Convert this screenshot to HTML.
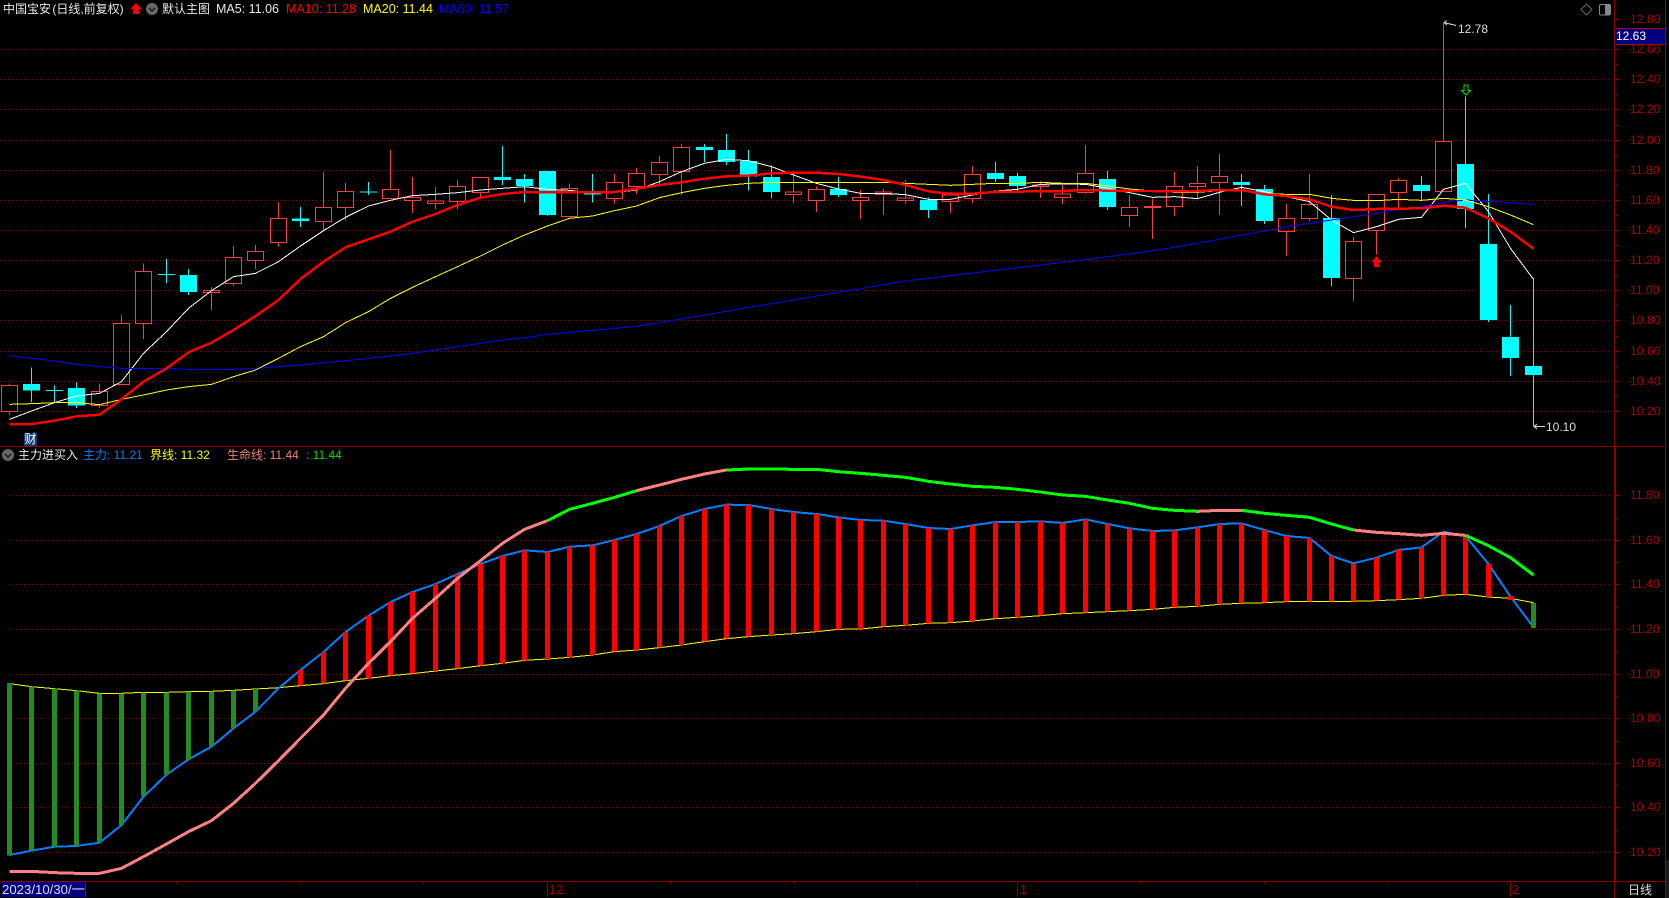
<!DOCTYPE html>
<html><head><meta charset="utf-8"><title>中国宝安</title>
<style>
html,body{margin:0;padding:0;background:#000}
#r{position:relative;width:1669px;height:898px;overflow:hidden;background:#000;font-family:"Liberation Sans","Noto Sans CJK SC",sans-serif}
svg{position:absolute;left:0;top:0;display:block}
#m *{vector-effect:non-scaling-stroke}
#r span{position:absolute;white-space:nowrap;line-height:16px;font-size:12.5px;height:16px}
.c{font-size:12px!important}
.a{color:#b00000;left:1630px;font-size:12.2px!important}
</style></head><body><div id="r">
<svg width="1669" height="898" viewBox="0 0 1669 898" shape-rendering="crispEdges" fill="none">
<path stroke="#800000" stroke-width="1" stroke-dasharray="1 3" d="M0 49.5H1611M0 79.5H1611M0 109.5H1611M0 140.5H1611M0 170.5H1611M0 200.5H1611M0 230.5H1611M0 260.5H1611M0 290.5H1611M0 320.5H1611M0 351.5H1611M0 381.5H1611M0 411.5H1611M8 495.5H1611M8 540.5H1611M8 584.5H1611M8 629.5H1611M8 674.5H1611M8 718.5H1611M8 763.5H1611M8 807.5H1611M8 852.5H1611"/>
</svg>
<svg id="m" width="1669" height="898" viewBox="0 0 1669 2694" preserveAspectRatio="none" fill="none" shape-rendering="crispEdges">
<!-- red candles -->
<path stroke="#ff3c3c" stroke-width="1" d="M9.5 1150V1156M9.5 1235V1245M1.5 1156H17.5V1235H1.5ZM99.5 1150V1175M99.5 1216V1224M91.5 1175H107.5V1216H91.5ZM121.5 945V970M113.5 970H129.5V1153H113.5ZM143.5 790V814M143.5 970V1017M135.5 814H151.5V970H135.5ZM211.5 861V871M211.5 878V930M203.5 871H219.5V878H203.5ZM233.5 738V772M233.5 851V858M225.5 772H241.5V851H225.5ZM255.5 735V754M255.5 781V807M247.5 754H263.5V781H247.5ZM278.5 606V655M278.5 728V741M270.5 655H286.5V728H270.5ZM323.5 516V622M323.5 665V690M315.5 622H331.5V665H315.5ZM345.5 549V574M345.5 623V662M337.5 574H353.5V623H337.5ZM390.5 450V568M382.5 568H398.5V596H382.5ZM412.5 531V592M412.5 602V639M404.5 592H420.5V602H404.5ZM435.5 561V603M435.5 611V627M427.5 603H443.5V611H427.5ZM457.5 540V559M457.5 605V629M449.5 559H465.5V605H449.5ZM480.5 578V595M472.5 532H488.5V578H472.5ZM569.5 550V565M561.5 565H577.5V650H561.5ZM614.5 522V547M614.5 596V611M606.5 547H622.5V596H606.5ZM636.5 504V520M636.5 560V582M628.5 520H644.5V560H628.5ZM659.5 468V487M659.5 524V555M651.5 487H667.5V524H651.5ZM681.5 432V442M681.5 515V585M673.5 442H689.5V515H673.5ZM793.5 513V576M793.5 584V609M785.5 576H801.5V584H785.5ZM816.5 560V568M816.5 602V636M808.5 568H824.5V602H808.5ZM860.5 570V592M860.5 602V657M852.5 592H868.5V602H852.5ZM883.5 567V576M883.5 584V645M875.5 576H891.5V584H875.5ZM905.5 540V594M905.5 602V612M897.5 594H913.5V602H897.5ZM950.5 576V585M950.5 605V639M942.5 585H958.5V605H942.5ZM972.5 498V523M972.5 596V609M964.5 523H980.5V596H964.5ZM1040.5 543V555M1040.5 560V594M1032.5 555H1048.5V560H1032.5ZM1062.5 555V582M1062.5 593V612M1054.5 582H1070.5V593H1054.5ZM1085.5 435V520M1085.5 578V582M1077.5 520H1093.5V578H1077.5ZM1129.5 585V622M1129.5 647V681M1121.5 622H1137.5V647H1121.5ZM1152.5 597V619M1152.5 623V717M1144.5 619H1160.5V623H1144.5ZM1174.5 516V559M1174.5 620V648M1166.5 559H1182.5V620H1166.5ZM1197.5 498V550M1197.5 560V594M1189.5 550H1205.5V560H1189.5ZM1219.5 462V529M1219.5 548V645M1211.5 529H1227.5V548H1211.5ZM1286.5 612V655M1286.5 695V768M1278.5 655H1294.5V695H1278.5ZM1309.5 522V613M1309.5 656V663M1301.5 613H1317.5V656H1301.5ZM1353.5 711V724M1353.5 836V903M1345.5 724H1361.5V836H1345.5ZM1376.5 692V763M1368.5 583H1384.5V692H1368.5ZM1398.5 534V541M1398.5 578V630M1390.5 541H1406.5V578H1390.5ZM1443.5 68V424M1435.5 424H1451.5V575H1435.5Z"/>
<!-- cyan wicks -->
<path stroke="#00ffff" stroke-width="1" d="M31.5 1102V1206M54.5 1156V1206M76.5 1147V1224M166.5 777V849M188.5 807V885M300.5 621V681M368.5 546V585M502.5 438V555M524.5 522V608M547.5 513V648M592.5 522V608M704.5 432V486M726.5 402V495M748.5 450V572M771.5 496V594M838.5 531V591M928.5 592V654M995.5 486V546M1017.5 519V573M1107.5 513V630M1241.5 522V618M1264.5 555V672M1331.5 585V858M1421.5 528V600M1465.5 290V684M1488.5 582V966M1510.5 915V1128M1533.5 834V1280"/>
<!-- cyan bodies -->
<path fill="#00ffff" d="M23 1152H40V1172H23ZM46 1170H63V1173H46ZM68 1164H85V1217H68ZM158 822H175V825H158ZM180 825H197V876H180ZM292 655H309V663H292ZM360 574H377V577H360ZM494 531H511V540H494ZM516 537H533V558H516ZM539 513H556V645H539ZM584 580H601V584H584ZM696 441H713V450H696ZM718 450H735V486H718ZM740 483H757V530H740ZM763 531H780V576H763ZM830 567H847V585H830ZM920 600H937V630H920ZM987 519H1004V537H987ZM1009 528H1026V558H1009ZM1099 537H1116V621H1099ZM1233 546H1250V555H1233ZM1256 567H1273V663H1256ZM1323 654H1340V834H1323ZM1413 555H1430V573H1413ZM1457 492H1474V627H1457ZM1480 732H1497V960H1480ZM1502 1011H1519V1074H1502ZM1525 1098H1542V1125H1525Z"/>
<!-- MA5 -->
<polyline stroke="#fff" stroke-width="1" points="9.5,1258 31.5,1233 54.5,1208 76.5,1188 99.5,1180 121.5,1145 143.5,1060 166.5,995 188.5,925 211.5,872 233.5,830 255.5,820 278.5,785 300.5,738 323.5,692 345.5,652 368.5,618 390.5,601 412.5,587 435.5,583 457.5,578 480.5,570 502.5,565 524.5,560 547.5,568 569.5,571 592.5,580 614.5,578 636.5,570 659.5,545 681.5,515 704.5,490 726.5,478 748.5,482 771.5,500 793.5,525 816.5,550 838.5,567 860.5,580 883.5,580 905.5,584 928.5,598 950.5,598 972.5,585 995.5,573 1017.5,568 1040.5,553 1062.5,552 1085.5,553 1107.5,565 1129.5,578 1152.5,592 1174.5,590 1197.5,596 1219.5,577 1241.5,562 1264.5,575 1286.5,590 1309.5,605 1331.5,660 1353.5,698 1376.5,680 1398.5,658 1421.5,652 1443.5,568 1465.5,550 1488.5,635 1510.5,745 1533.5,838"/>
<!-- MA60 -->
<polyline stroke="#0000ff" stroke-width="1" points="9.5,1067 31.5,1075 54.5,1083 76.5,1093 99.5,1100 121.5,1105 143.5,1105 166.5,1105 188.5,1108 211.5,1108 233.5,1108 255.5,1105 278.5,1100 300.5,1095 323.5,1088 345.5,1082 368.5,1075 390.5,1068 412.5,1060 435.5,1050 457.5,1040 480.5,1030 502.5,1020 524.5,1013 547.5,1003 569.5,997 592.5,991 614.5,985 636.5,979 659.5,968 681.5,957 704.5,945 726.5,934 748.5,922 771.5,911 793.5,900 816.5,888 838.5,877 860.5,866 883.5,854 905.5,843 928.5,835 950.5,827 972.5,819 995.5,811 1017.5,803 1040.5,795 1062.5,787 1085.5,779 1107.5,770 1129.5,762 1152.5,752 1174.5,742 1197.5,730 1219.5,718 1241.5,705 1264.5,693 1286.5,680 1309.5,670 1331.5,660 1353.5,650 1376.5,640 1398.5,628 1421.5,620 1443.5,607 1465.5,600 1488.5,604 1510.5,608 1533.5,613"/>
<!-- MA20 -->
<polyline stroke="#ffff00" stroke-width="1" points="9.5,1213 31.5,1211 54.5,1208 76.5,1208 99.5,1214 121.5,1198 143.5,1185 166.5,1170 188.5,1160 211.5,1153 233.5,1130 255.5,1110 278.5,1075 300.5,1040 323.5,1010 345.5,968 368.5,935 390.5,895 412.5,862 435.5,830 457.5,800 480.5,768 502.5,735 524.5,705 547.5,678 569.5,655 592.5,648 614.5,632 636.5,618 659.5,593 681.5,578 704.5,565 726.5,556 748.5,550 771.5,547 793.5,547 816.5,547 838.5,547 860.5,547 883.5,547 905.5,550 928.5,553 950.5,556 972.5,553 995.5,550 1017.5,550 1040.5,547 1062.5,550 1085.5,550 1107.5,558 1129.5,567 1152.5,573 1174.5,577 1197.5,577 1219.5,572 1241.5,572 1264.5,581 1286.5,583 1309.5,583 1331.5,595 1353.5,601 1376.5,602 1398.5,598 1421.5,601 1443.5,595 1465.5,600 1488.5,620 1510.5,645 1533.5,674"/>
<!-- MA10 -->
<polyline stroke="#ff0000" stroke-width="2.5" points="9.5,1272 31.5,1272 54.5,1262 76.5,1249 99.5,1244 121.5,1198 143.5,1145 166.5,1105 188.5,1057 211.5,1028 233.5,990 255.5,948 278.5,900 300.5,837 323.5,785 345.5,742 368.5,718 390.5,695 412.5,665 435.5,642 457.5,615 480.5,593 502.5,582 524.5,576 547.5,576 569.5,576 592.5,577 614.5,576 636.5,566 659.5,555 681.5,547 704.5,536 726.5,529 748.5,527 771.5,520 793.5,518 816.5,518 838.5,522 860.5,530 883.5,540 905.5,555 928.5,574 950.5,582 972.5,581 995.5,576 1017.5,575 1040.5,573 1062.5,573 1085.5,570 1107.5,572 1129.5,573 1152.5,573 1174.5,573 1197.5,573 1219.5,570 1241.5,570 1264.5,583 1286.5,588 1309.5,598 1331.5,620 1353.5,630 1376.5,627 1398.5,626 1421.5,625 1443.5,617 1465.5,623 1488.5,655 1510.5,695 1533.5,746"/>
<g transform="translate(0,1350)">
<polyline stroke="#ffff00" stroke-width="1" points="9.5,701 31.5,710 54.5,716 76.5,722 99.5,730 121.5,730 143.5,727 166.5,727 188.5,725 211.5,724 233.5,721 255.5,717 278.5,713 300.5,707 323.5,701 345.5,692 368.5,685 390.5,677 412.5,671 435.5,663 457.5,656 480.5,647 502.5,640 524.5,631 547.5,627 569.5,622 592.5,615 614.5,605 636.5,600 659.5,593 681.5,585 704.5,575 726.5,566 748.5,560 771.5,555 793.5,551 816.5,545 838.5,538 860.5,537 883.5,530 905.5,526 928.5,520 950.5,518 972.5,513 995.5,506 1017.5,502 1040.5,497 1062.5,491 1085.5,488 1107.5,485 1129.5,482 1152.5,478 1174.5,472 1197.5,469 1219.5,463 1241.5,460 1264.5,458 1286.5,455 1309.5,454 1331.5,454 1353.5,454 1376.5,452 1398.5,449 1421.5,445 1443.5,436 1465.5,433 1488.5,441 1510.5,445 1533.5,458"/>
<polyline stroke="#0080ff" stroke-width="2" points="9.5,1215 31.5,1202 54.5,1190 76.5,1188 99.5,1178 121.5,1125 143.5,1040 166.5,974 188.5,928 211.5,890 233.5,835 255.5,785 278.5,715 300.5,660 323.5,606 345.5,546 368.5,497 390.5,456 412.5,426 435.5,402 457.5,372 480.5,342 502.5,318 524.5,301 547.5,306 569.5,290 592.5,286 614.5,270 636.5,252 659.5,228 681.5,198 704.5,177 726.5,164 748.5,165 771.5,177 793.5,186 816.5,192 838.5,202 860.5,210 883.5,212 905.5,222 928.5,234 950.5,237 972.5,226 995.5,216 1017.5,216 1040.5,214 1062.5,219 1085.5,208 1107.5,222 1129.5,235 1152.5,243 1174.5,241 1197.5,232 1219.5,222 1241.5,220 1264.5,240 1286.5,258 1309.5,264 1331.5,318 1353.5,340 1376.5,323 1398.5,300 1421.5,292 1443.5,245 1465.5,258 1488.5,342 1510.5,440 1533.5,532"/>
<path fill="#228b22" d="M7 699H12V1217H7ZM29 710H34V1202H29ZM52 716H57V1190H52ZM74 722H79V1188H74ZM97 730H102V1178H97ZM119 730H124V1125H119ZM141 727H146V1040H141ZM164 727H169V974H164ZM186 725H191V928H186ZM209 724H214V890H209ZM231 721H236V835H231ZM253 717H258V785H253ZM1531 459H1536V534H1531Z"/>
<path fill="#ff0000" d="M298 660H303V707H298ZM321 606H326V701H321ZM343 546H348V692H343ZM366 497H371V685H366ZM388 456H393V677H388ZM410 426H415V671H410ZM433 402H438V663H433ZM455 372H460V656H455ZM478 342H483V647H478ZM500 318H505V640H500ZM522 301H527V631H522ZM545 306H550V627H545ZM567 290H572V622H567ZM590 286H595V615H590ZM612 270H617V605H612ZM634 252H639V600H634ZM657 228H662V593H657ZM679 198H684V585H679ZM702 177H707V575H702ZM724 164H729V566H724ZM746 165H751V560H746ZM769 177H774V555H769ZM791 186H796V551H791ZM814 192H819V545H814ZM836 202H841V538H836ZM858 210H863V537H858ZM881 212H886V530H881ZM903 222H908V526H903ZM926 234H931V520H926ZM948 237H953V518H948ZM970 226H975V513H970ZM993 216H998V506H993ZM1015 216H1020V502H1015ZM1038 214H1043V497H1038ZM1060 219H1065V491H1060ZM1083 208H1088V488H1083ZM1105 222H1110V485H1105ZM1127 235H1132V482H1127ZM1150 243H1155V478H1150ZM1172 241H1177V472H1172ZM1195 232H1200V469H1195ZM1217 222H1222V463H1217ZM1239 220H1244V460H1239ZM1262 240H1267V458H1262ZM1284 258H1289V455H1284ZM1307 264H1312V454H1307ZM1329 318H1334V454H1329ZM1351 340H1356V454H1351ZM1374 323H1379V452H1374ZM1396 300H1401V449H1396ZM1419 292H1424V445H1419ZM1441 250H1446V436H1441ZM1463 258H1468V433H1463ZM1486 342H1491V441H1486ZM1508 438H1513V450H1508Z"/>
<g stroke-width="3">
<polyline stroke="#ff8080" points="9.5,1264 31.5,1264 54.5,1268 76.5,1270 99.5,1270 121.5,1255 143.5,1220 166.5,1182 188.5,1145 211.5,1112 233.5,1060 255.5,1000 278.5,932 300.5,865 323.5,795 345.5,715 368.5,640 390.5,575 412.5,505 435.5,445 457.5,385 480.5,332 502.5,280 524.5,238 547.5,212"/>
<polyline stroke="#00ff00" points="547.5,212 569.5,178 592.5,160 614.5,142 636.5,122"/>
<polyline stroke="#ff8080" points="636.5,122 659.5,105 681.5,88 704.5,72 726.5,60"/>
<polyline stroke="#00ff00" points="726.5,60 748.5,57 771.5,57 793.5,58 816.5,58 838.5,65 860.5,70 883.5,76 905.5,82 928.5,94 950.5,102 972.5,109 995.5,112 1017.5,118 1040.5,126 1062.5,135 1085.5,139 1107.5,150 1129.5,160 1152.5,175 1174.5,181 1197.5,184"/>
<polyline stroke="#ff8080" points="1197.5,184 1219.5,181 1241.5,181"/>
<polyline stroke="#00ff00" points="1241.5,181 1264.5,190 1286.5,196 1309.5,202 1331.5,222 1353.5,240"/>
<polyline stroke="#ff8080" points="1353.5,240 1376.5,247 1398.5,251 1421.5,256 1443.5,250 1465.5,256"/>
<polyline stroke="#00ff00" points="1465.5,256 1488.5,287 1510.5,323 1533.5,375"/>
</g>
</g>
</svg>
<svg width="1669" height="898" viewBox="0 0 1669 898" fill="none">
<g shape-rendering="crispEdges">
<path stroke="#8b0000" d="M0 446.5H1665M0 881.5H1665M1614.5 0V898M547.5 882V897M1017.5 882V897M1510.5 882V897"/>
<path stroke="#8b0000" d="M1615.5 446V881"/>
<path stroke="#8b0000" d="M1615 19.5H1620M1615 49.5H1620M1615 79.5H1620M1615 109.5H1620M1615 140.5H1620M1615 170.5H1620M1615 200.5H1620M1615 230.5H1620M1615 260.5H1620M1615 290.5H1620M1615 320.5H1620M1615 351.5H1620M1615 381.5H1620M1615 411.5H1620M1615 495.5H1620M1615 540.5H1620M1615 584.5H1620M1615 629.5H1620M1615 674.5H1620M1615 718.5H1620M1615 763.5H1620M1615 807.5H1620M1615 852.5H1620"/>
<path stroke="#8b0000" d="M1615 64.5H1618M1615 94.5H1618M1615 125.5H1618M1615 155.5H1618M1615 185.5H1618M1615 215.5H1618M1615 245.5H1618M1615 275.5H1618M1615 305.5H1618M1615 336.5H1618M1615 366.5H1618M1615 396.5H1618M1615 518.5H1618M1615 562.5H1618M1615 607.5H1618M1615 652.5H1618M1615 696.5H1618M1615 741.5H1618M1615 785.5H1618M1615 830.5H1618"/>
<path stroke="#8b0000" d="M176.5 882V884M300.5 882V884M423.5 882V884M670.5 882V884M794.5 882V884M917.5 882V884M1140.5 882V884M1264.5 882V884M1387.5 882V884"/>
<rect x="1665" y="0" width="1" height="898" fill="#333"/>
<rect x="1666" y="860" width="3" height="38" fill="#1a1a1a"/>
<rect x="1615" y="28" width="50" height="16" fill="#000080"/>
<path stroke="#b00000" d="M1615 28.5H1665M1615 44.5H1665"/>
<rect x="2" y="882" width="84" height="15" fill="#000080"/>
<path stroke="#a00000" d="M85.5 882V897"/>
<rect x="24" y="433" width="13" height="13" fill="#123e78"/>
</g>
<!-- top-left up arrow -->
<path fill="#ff0000" d="M136 3L142 9H139V14H133V9H130Z"/>
<circle cx="152" cy="9" r="6" fill="#666"/>
<path d="M149 8L152 11L155 8" stroke="#1a1a1a" stroke-width="1.4"/>
<circle cx="8" cy="455" r="6" fill="#666"/>
<path d="M5 454L8 457L11 454" stroke="#1a1a1a" stroke-width="1.4"/>
<!-- top-right icons -->
<path d="M1586.5 4L1592 9.5L1586.5 15L1581 9.5Z" stroke="#666"/>
<rect x="1599.5" y="4.5" width="11" height="10.5" rx="1.5" stroke="#888"/>
<rect x="1605" y="5" width="5" height="9.5" fill="#888"/>
<!-- annotation arrows -->
<path stroke="#ddd" d="M1444 22.5L1456 25.5M1444 22.5L1447 20.5M1444 22.5L1447 25"/>
<path stroke="#ddd" d="M1534 426.5H1545M1534 426.5L1537 424M1534 426.5L1537 429"/>
<!-- signal arrows -->
<path fill="#ff0000" d="M1376.5 256L1381.5 262H1379V267H1374V262H1371.5Z"/>
<path stroke="#00e000" d="M1464 85H1468V90.5H1470.5L1466 95L1461.5 90.5H1464Z"/>
</svg>
<span class="c" style="left:3px;top:1px;color:#e8e8e8;word-spacing:-2px">中国宝安 (日线,前复权)</span>
<span class="c" style="left:162px;top:1px;color:#e8e8e8">默认主图</span>
<span style="left:216px;top:1px;color:#e8e8e8">MA5: 11.06</span>
<span style="left:286px;top:1px;color:#ff0000">MA10: 11.28</span>
<span style="left:363px;top:1px;color:#ffff00">MA20: 11.44</span>
<span style="left:439px;top:1px;color:#0000ff">MA60: 11.57</span>
<span class="c" style="left:18px;top:447px;color:#e8e8e8">主力进买入</span>
<span class="c" style="left:83px;top:447px;color:#0080ff">主力: 11.21</span>
<span class="c" style="left:150px;top:447px;color:#ffff00">界线: 11.32</span>
<span class="c" style="left:227px;top:447px;color:#f08070">生命线: 11.44</span>
<span class="c" style="left:306px;top:447px;color:#00e000">: 11.44</span>
<span class="c" style="left:24.5px;top:431px;color:#fff">财</span>
<span class="c" style="left:1458px;top:21px;color:#ddd">12.78</span>
<span class="c" style="left:1546px;top:419px;color:#ddd">10.10</span>
<span class="a" style="top:11px">12.80</span>
<span class="a" style="top:41px">12.60</span>
<span class="a" style="top:71px">12.40</span>
<span class="a" style="top:101px">12.20</span>
<span class="a" style="top:132px">12.00</span>
<span class="a" style="top:162px">11.80</span>
<span class="a" style="top:192px">11.60</span>
<span class="a" style="top:222px">11.40</span>
<span class="a" style="top:252px">11.20</span>
<span class="a" style="top:282px">11.00</span>
<span class="a" style="top:312px">10.80</span>
<span class="a" style="top:343px">10.60</span>
<span class="a" style="top:373px">10.40</span>
<span class="a" style="top:403px">10.20</span>
<span class="a" style="top:487px">11.80</span>
<span class="a" style="top:532px">11.60</span>
<span class="a" style="top:576px">11.40</span>
<span class="a" style="top:621px">11.20</span>
<span class="a" style="top:666px">11.00</span>
<span class="a" style="top:710px">10.80</span>
<span class="a" style="top:755px">10.60</span>
<span class="a" style="top:799px">10.40</span>
<span class="a" style="top:844px">10.20</span>
<span class="c" style="left:1616px;top:28px;color:#fff">12.63</span>
<span style="left:2px;top:882px;font-size:13.2px;color:#dde">2023/10/30/一</span>
<span style="left:549px;top:882px;color:#b00000;font-size:13px">12</span>
<span style="left:1020px;top:882px;color:#b00000;font-size:13px">1</span>
<span style="left:1512px;top:882px;color:#b00000;font-size:13px">2</span>
<span class="c" style="left:1628px;top:882px;color:#ddd">日线</span>
</div></body></html>
